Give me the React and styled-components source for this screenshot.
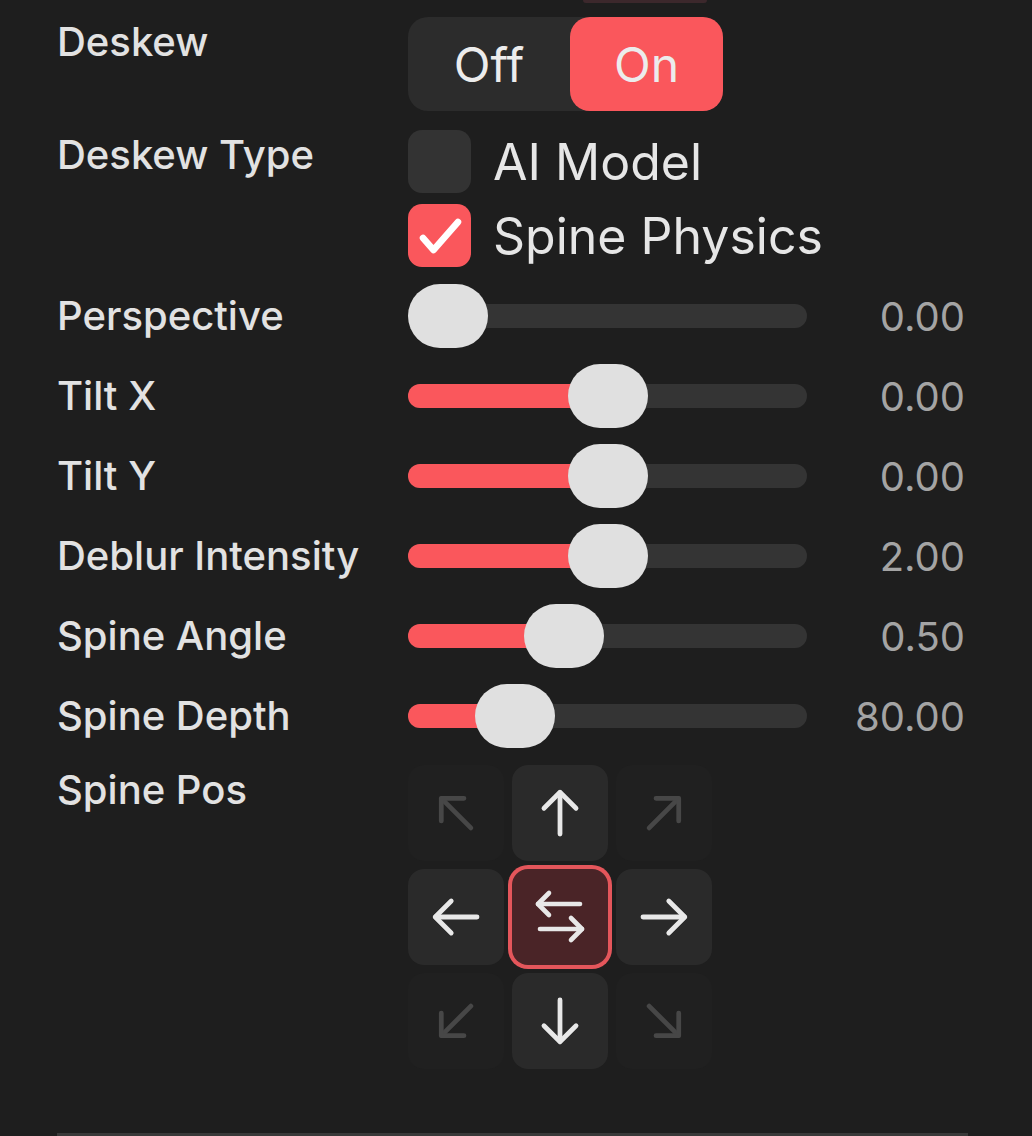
import React from 'react';
import styled, { createGlobalStyle } from 'styled-components';

const GlobalStyle = createGlobalStyle`
  * { box-sizing: border-box; }
  body {
    margin: 0;
    background: #1e1e1e;
    font-family: Inter, "Liberation Sans", Arial, sans-serif;
  }
`;

const RED = '#fa575c';

const Page = styled.div`
  width: 1032px;
  height: 1136px;
  overflow: hidden;
  padding: 0 64px 0 57px;
  background: #1e1e1e;
  color: #e3e3e3;
`;

// bottom edge of the control that sits above this part of the panel
const Tail = styled.div`
  margin-left: 526px;
  width: 124px;
  height: 3px;
  background: #3c282c;
  border-radius: 0 0 6px 6px;
`;

const Row = styled.div`
  display: grid;
  grid-template-columns: 351px 399px 1fr;
  align-items: ${(p) => (p.$center ? 'center' : 'start')};
  margin-top: ${(p) => p.$top}px;
`;

const Label = styled.div`
  font-size: 40px;
  line-height: 50px;
  font-weight: 500;
  color: #e2e2e2;
  white-space: nowrap;
`;

const Value = styled.div`
  justify-self: end;
  padding-right: 3px;
  font-size: 40px;
  color: #a4a4a4;
`;

const Segmented = styled.div`
  display: flex;
  width: 315px;
  height: 94px;
  background: #2c2c2c;
  border-radius: 20px;
`;

const Segment = styled.div`
  width: ${(p) => p.$w}px;
  display: flex;
  align-items: center;
  justify-content: center;
  border-radius: 20px;
  font-size: 48px;
  color: #ececec;
  background: ${(p) => (p.$active ? RED : 'transparent')};
`;

const CheckList = styled.div`
  display: flex;
  flex-direction: column;
  gap: 11px;
`;

const CheckItem = styled.div`
  display: flex;
  align-items: center;
  gap: 22px;
  white-space: nowrap;
`;

const Box = styled.div`
  width: 63px;
  height: 63px;
  flex: none;
  border-radius: 14px;
  display: flex;
  align-items: center;
  justify-content: center;
  background: ${(p) => (p.$checked ? RED : '#333333')};
`;

const CheckText = styled.span`
  font-size: 50px;
  color: #e6e6e6;
`;

const SliderWrap = styled.div`
  position: relative;
  width: 399px;
  height: 64px;
`;

const Track = styled.div`
  position: absolute;
  left: 0;
  right: 0;
  top: 20px;
  height: 24px;
  border-radius: 12px;
  background: #343434;
  overflow: hidden;
`;

const Fill = styled.div`
  height: 100%;
  background: ${RED};
`;

const Thumb = styled.div`
  position: absolute;
  top: 0;
  width: 80px;
  height: 64px;
  border-radius: 32px;
  background: #e0e0e0;
`;

const Pad = styled.div`
  display: grid;
  grid-template-columns: repeat(3, 96px);
  grid-auto-rows: 96px;
  gap: 8px;
`;

const Cell = styled.div`
  border-radius: 16px;
  display: flex;
  align-items: center;
  justify-content: center;
  background: ${(p) => (p.$active ? '#4a2427' : p.$dim ? '#202020' : '#2a2a2a')};
  box-shadow: ${(p) => (p.$active ? `0 0 0 4px #e4565b` : 'none')};
  color: ${(p) => (p.$dim ? '#474747' : '#e8e8e8')};
`;

const Divider = styled.div`
  margin-top: 64px;
  height: 20px;
  background: #393939;
`;

const Arrow = ({ rotate = 0 }) => (
  <svg
    width="52"
    height="52"
    viewBox="0 0 24 24"
    fill="none"
    stroke="currentColor"
    strokeWidth="2.2"
    strokeLinecap="round"
    strokeLinejoin="round"
    style={{ transform: `rotate(${rotate}deg)` }}
  >
    <path d="M12 21.7V2.6" />
    <path d="M4.6 9.8 12 2.4l7.4 7.4" />
  </svg>
);

const Swap = () => (
  <svg
    width="54"
    height="56"
    viewBox="0 0 54 56"
    fill="none"
    stroke="currentColor"
    strokeWidth="4.6"
    strokeLinecap="round"
    strokeLinejoin="round"
  >
    <path d="M5 15h42" />
    <path d="M16 4 5 15l11 11" />
    <path d="M49 40H7" />
    <path d="M38 29l11 11-11 11" />
  </svg>
);

const Check = () => (
  <svg width="63" height="63" viewBox="0 0 63 63" fill="none" stroke="#fff" strokeWidth="6.5" strokeLinecap="round" strokeLinejoin="round">
    <path d="M15 34l10.5 12L50 18" />
  </svg>
);

const Slider = ({ pct }) => {
  const left = pct * (399 - 80);
  return (
    <SliderWrap>
      <Track>
        <Fill style={{ width: pct > 0 ? left + 40 : 0 }} />
      </Track>
      <Thumb style={{ left }} />
    </SliderWrap>
  );
};

const sliders = [
  { label: 'Perspective', pct: 0, value: '0.00' },
  { label: 'Tilt X', pct: 0.5, value: '0.00' },
  { label: 'Tilt Y', pct: 0.5, value: '0.00' },
  { label: 'Deblur Intensity', pct: 0.5, value: '2.00' },
  { label: 'Spine Angle', pct: 0.364, value: '0.50' },
  { label: 'Spine Depth', pct: 0.21, value: '80.00' },
];

const pad = [
  { rot: -45, dim: true },
  { rot: 0 },
  { rot: 45, dim: true },
  { rot: -90 },
  { center: true },
  { rot: 90 },
  { rot: -135, dim: true },
  { rot: 180 },
  { rot: 135, dim: true },
];

const App = () => {
  return (
    <Page>
      <GlobalStyle />
      <Tail />
      <Row $top={14}>
        <Label>Deskew</Label>
        <Segmented>
          <Segment $w={162}>Off</Segment>
          <Segment $w={153} $active>On</Segment>
        </Segmented>
      </Row>
      <Row $top={19}>
        <Label>Deskew Type</Label>
        <CheckList>
          <CheckItem>
            <Box />
            <CheckText>AI Model</CheckText>
          </CheckItem>
          <CheckItem>
            <Box $checked>
              <Check />
            </Box>
            <CheckText>Spine Physics</CheckText>
          </CheckItem>
        </CheckList>
      </Row>
      {sliders.map((s, i) => (
        <Row key={s.label} $center $top={i === 0 ? 17 : 16}>
          <Label>{s.label}</Label>
          <Slider pct={s.pct} />
          <Value>{s.value}</Value>
        </Row>
      ))}
      <Row $top={17}>
        <Label>Spine Pos</Label>
        <Pad>
          {pad.map((c, i) => (
            <Cell key={i} $dim={c.dim} $active={c.center}>
              {c.center ? <Swap /> : <Arrow rotate={c.rot} />}
            </Cell>
          ))}
        </Pad>
      </Row>
      <Divider />
    </Page>
  );
};

export default App;
